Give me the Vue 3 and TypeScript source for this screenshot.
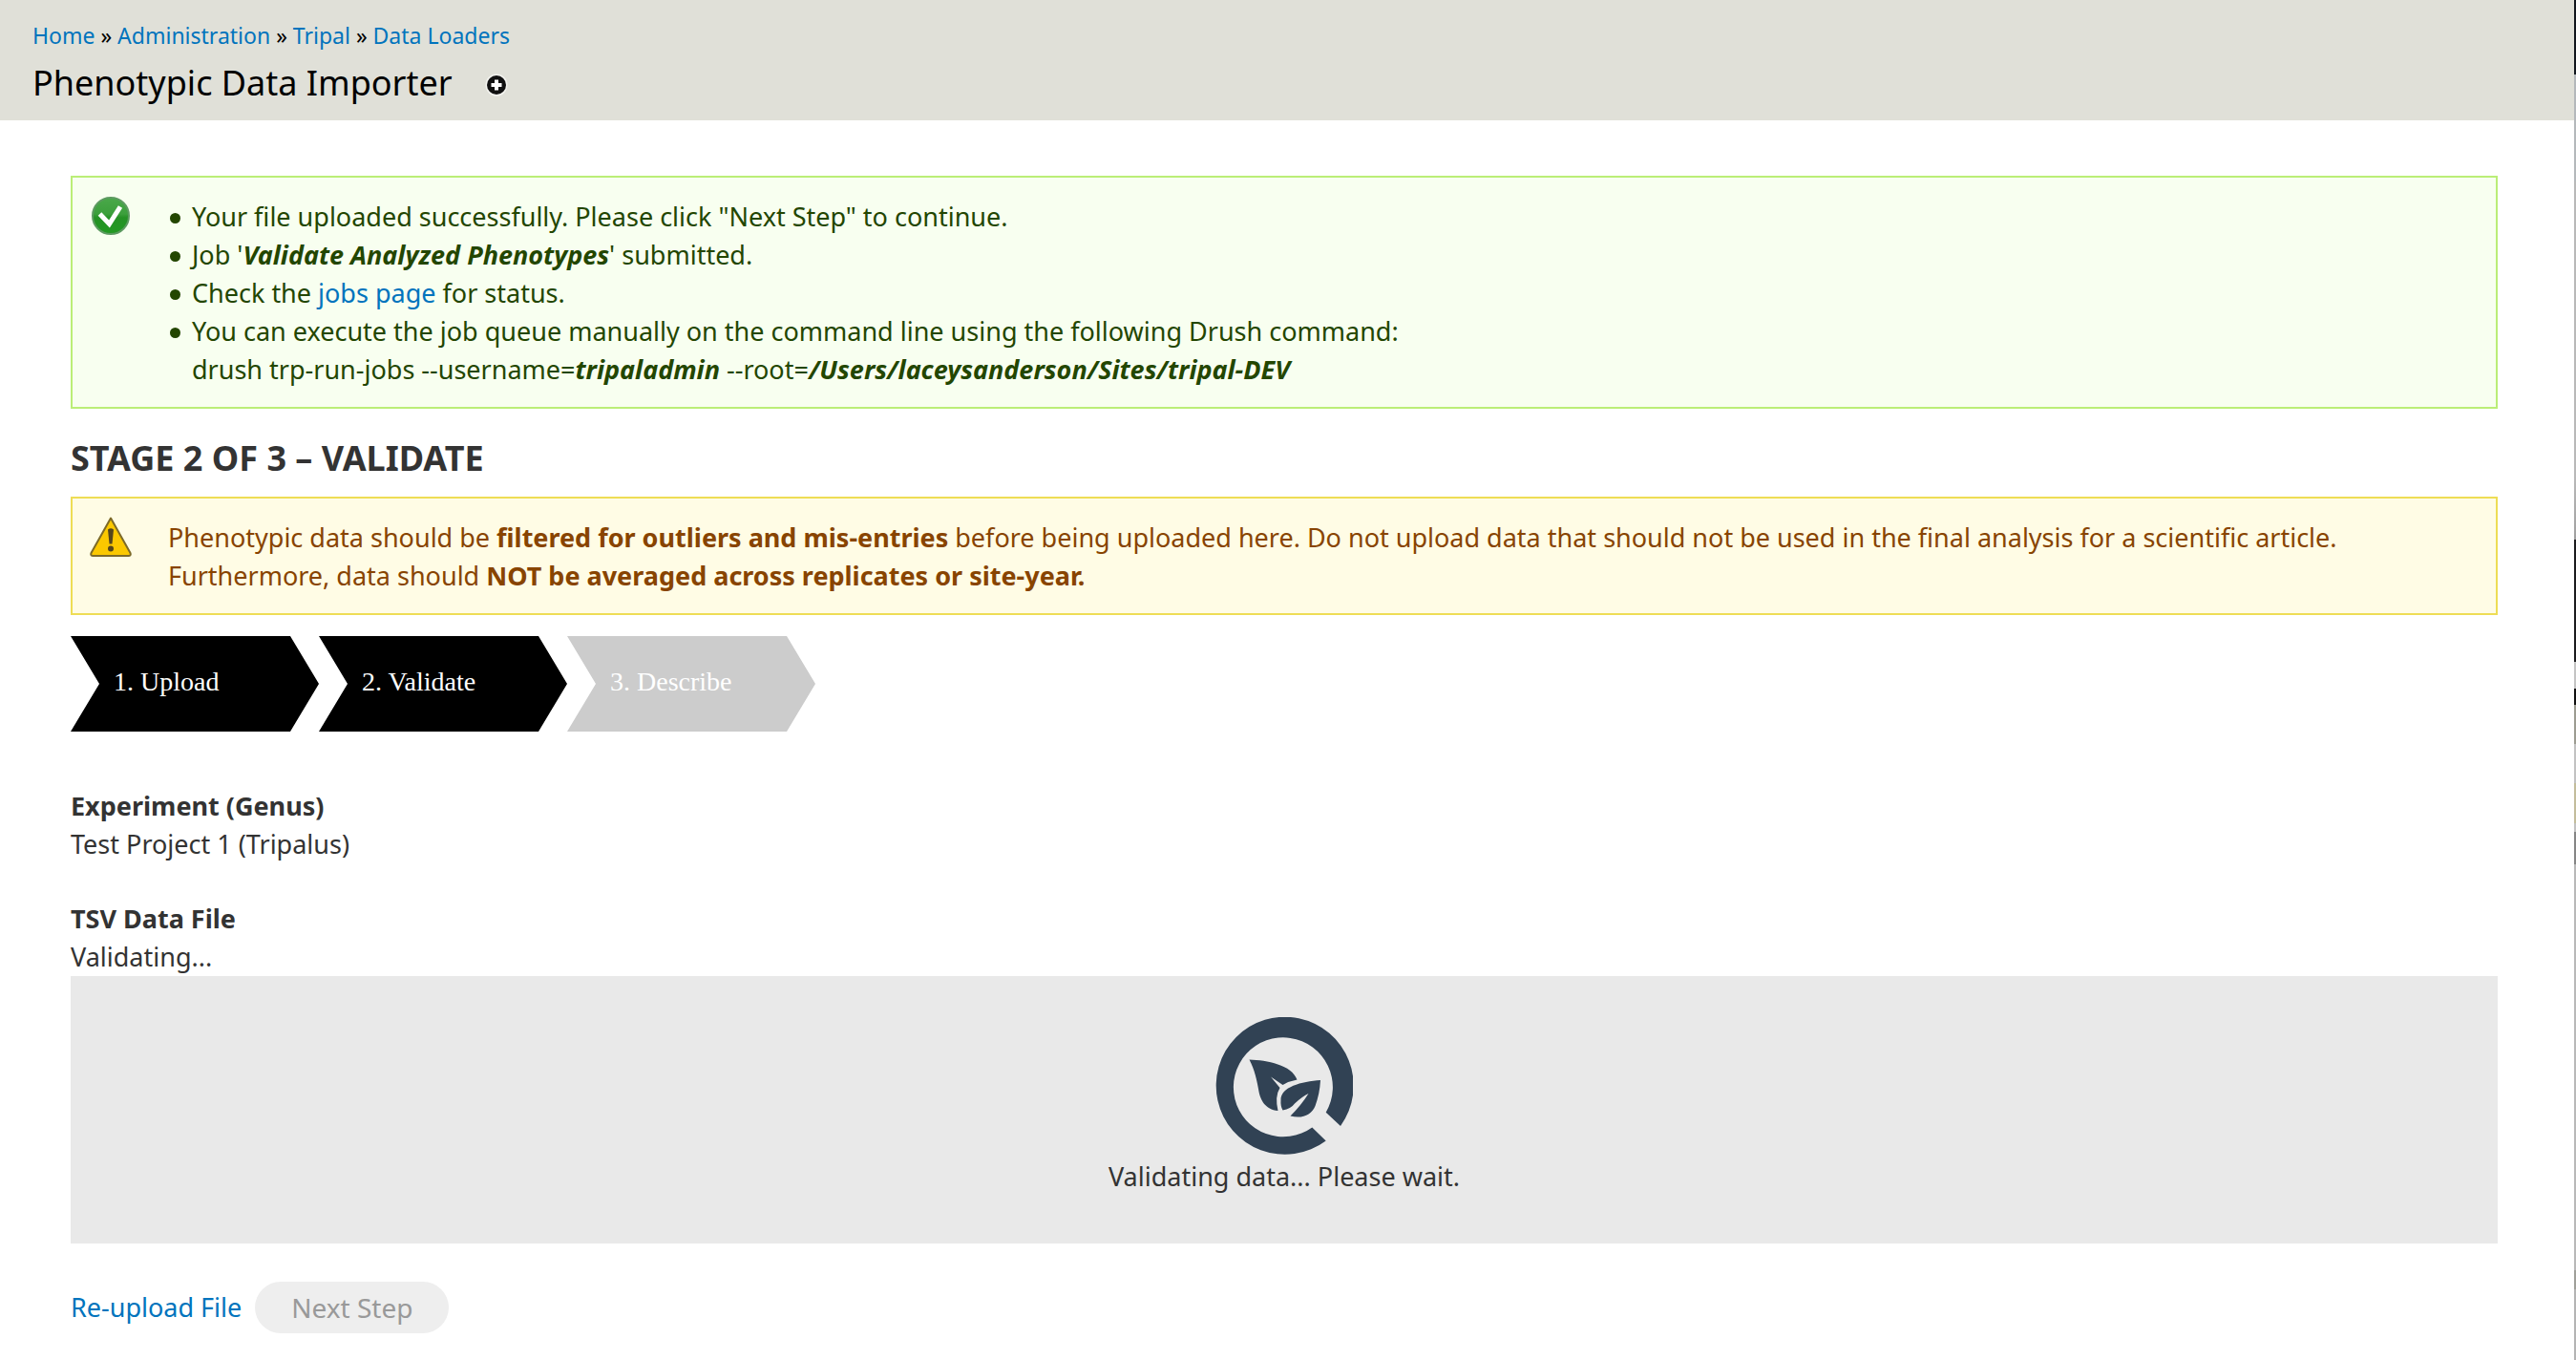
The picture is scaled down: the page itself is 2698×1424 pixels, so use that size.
<script setup lang="ts">
interface Crumb {
  label: string
  href: string
}

interface Step {
  label: string
  done: boolean
}

const crumbs: Crumb[] = [
  { label: 'Home', href: '#home' },
  { label: 'Administration', href: '#admin' },
  { label: 'Tripal', href: '#tripal' },
  { label: 'Data Loaders', href: '#loaders' },
]

const steps: Step[] = [
  { label: '1. Upload', done: true },
  { label: '2. Validate', done: true },
  { label: '3. Describe', done: false },
]
</script>

<template>
  <div class="page">
    <div class="main">
      <header class="branding">
        <nav class="breadcrumb" aria-label="Breadcrumb">
          <template v-for="(crumb, i) in crumbs" :key="crumb.label">
            <template v-if="i > 0"> » </template><a :href="crumb.href">{{ crumb.label }}</a>
          </template>
        </nav>
        <div class="title-row">
          <h1>Phenotypic Data Importer</h1>
          <a class="shortcut" href="#add-shortcut" aria-label="Add to shortcuts">
            <svg viewBox="0 0 24 24" width="24" height="24">
              <circle cx="12" cy="12" r="11.5" fill="#f4f4f0" />
              <circle cx="12" cy="12" r="10" fill="#111" />
              <path d="M12 6.500v11M6.500 12h11" stroke="#fff" stroke-width="4" />
            </svg>
          </a>
        </div>
      </header>

      <main class="content">
        <section class="message status">
          <svg class="message-icon" viewBox="0 0 44 44" width="44" height="44" aria-hidden="true">
            <defs>
              <linearGradient id="ok" x1="0" y1="0" x2="0" y2="1">
                <stop offset="0" stop-color="#4aa84a" />
                <stop offset="0.450" stop-color="#3c9f3c" />
                <stop offset="0.550" stop-color="#259125" />
                <stop offset="1" stop-color="#229a22" />
              </linearGradient>
            </defs>
            <circle cx="22" cy="22" r="19" fill="url(#ok)" stroke="#5c9a60" stroke-width="2" />
            <path d="M10.500 20L20.500 30.500L32 12.500" fill="none" stroke="#fff" stroke-width="5" />
          </svg>
          <ul>
            <li><span>Your file uploaded successfully. Please click "Next Step" to continue.</span></li>
            <li><span>Job '<em>Validate Analyzed Phenotypes</em>' submitted.</span></li>
            <li><span>Check the <a href="#jobs">jobs page</a> for status.</span></li>
            <li>
              <span>
                You can execute the job queue manually on the command line using the following Drush command:<br />
                drush trp-run-jobs --username=<em>tripaladmin</em> --root=<em>/Users/laceysanderson/Sites/tripal-DEV</em>
              </span>
            </li>
          </ul>
        </section>

        <h2>STAGE 2 OF 3 – VALIDATE</h2>

        <section class="message warning">
          <svg class="message-icon" viewBox="0 0 44 44" width="44" height="44" aria-hidden="true">
            <path d="M22 2.500L42.500 39Q43.500 42 40.500 42H3.500Q0.500 42 1.500 39Z" fill="#fbc800" stroke="#7d6a28" stroke-width="2" stroke-linejoin="round" />
            <path d="M19 14.500q3-2.500 6 0l-1.500 15h-3z" fill="#54451c" />
            <circle cx="22" cy="34.500" r="3" fill="#54451c" />
          </svg>
          <p>
            Phenotypic data should be <strong>filtered for outliers and mis-entries</strong> before being uploaded here. Do not upload data that should not be used in the final analysis for a scientific article.<br />
            Furthermore, data should <strong>NOT be averaged across replicates or site-year.</strong>
          </p>
        </section>

        <ol class="steps">
          <li v-for="step in steps" :key="step.label" :class="{ done: step.done }">{{ step.label }}</li>
        </ol>

        <dl class="details">
          <div>
            <dt>Experiment (Genus)</dt>
            <dd>Test Project 1 (Tripalus)</dd>
          </div>
          <div>
            <dt>TSV Data File</dt>
            <dd>Validating...</dd>
          </div>
        </dl>

        <div class="progress" role="status">
          <svg viewBox="0 0 144 144" width="144" height="144" aria-hidden="true">
            <g fill="#314254">
              <path d="M131 114A72 72 0 1 0 115.700 129.500L101.300 115.500A52 52 0 1 1 115.700 99.700Z" />
              <path d="M35.500 44.500C54 45 80 50 85.500 65.500Q77 67 70.500 71L58 62.500L67.500 74Q62 83 65.500 98C52 97 47 86 45.500 78C43.500 66 41 55 35.500 44.500Z" />
              <path d="M110 66C90 67.500 68 73 68.500 87Q68 93 70.500 97.500Q79 96 83 90.500Q91 83 97.500 80Q90 92 78.500 103.500C91 107 101 102 104.500 93C107.500 85 109.500 76 110 66Z" />
            </g>
          </svg>
          <p>Validating data... Please wait.</p>
        </div>

        <div class="actions">
          <a href="#reupload">Re-upload File</a>
          <button type="button" disabled>Next Step</button>
        </div>
      </main>
    </div>
    <div class="edge" aria-hidden="true"></div>
  </div>
</template>

<style>
body {
  margin: 0;
  background: #fff;
}
</style>

<style scoped>
.page {
  display: flex;
  min-height: 100vh;
  color: #333;
  font-family: "Noto Sans", "Open Sans", sans-serif;
  font-size: 27px;
  line-height: 40px;
}

.main {
  flex: 1;
  min-width: 0;
}

/* sliver of the window behind, seen past the page's right side */
.edge {
  width: 2px;
  background: linear-gradient(
    #12171e 0 78px,
    #b4b8bb 78px 190px,
    #b8b8b8 190px 500px,
    #a0a0a0 565px,
    #1c1c1e 565px 693px,
    #c4c4c4 693px 721px,
    #111 721px 738px,
    #9d9c92 738px 779px,
    #c2c2c2 779px 820px,
    #c3bd9c 820px 862px,
    #c2c2c2 862px 871px,
    #868686 871px 905px,
    #b8b8b8 905px 1330px,
    #a0a09a 1330px 1350px,
    #b4b4b4 1350px
  );
}

a {
  color: #0074bd;
  text-decoration: none;
}

.branding {
  box-sizing: border-box;
  height: 126px;
  padding: 20px 34px 0;
  background: #e0e0d8;
  color: #000;
}

.breadcrumb {
  font-size: 23px;
  line-height: 34px;
}

.title-row {
  display: flex;
  align-items: center;
  gap: 34px;
}

h1 {
  margin: 0;
  font-size: 36px;
  font-weight: 400;
  line-height: 66px;
}

.shortcut {
  display: flex;
  padding-top: 4px;
}

.content {
  padding: 58px 80px 24px 74px;
}

.message {
  display: flex;
  padding-bottom: 19px;
  border: 2px solid;
}

.message-icon {
  flex: none;
  margin: 18px 38px 0 18px;
}

.status {
  border-color: #be7;
  background: #f8fff0;
  color: #234600;
}

.status ul {
  margin: 21px 0 0;
  padding: 0 0 0 2px;
  list-style: none;
}

.status li {
  display: flex;
  gap: 12px;
}

.status li::before {
  flex: none;
  width: 11px;
  height: 11px;
  margin-top: 16px;
  border-radius: 50%;
  background: currentColor;
  content: "";
}

.status em {
  font-weight: 700;
}

h2 {
  margin: 32px 0 20px;
  font-size: 36px;
  font-weight: 700;
  line-height: 40px;
}

.warning {
  border-color: #ed5;
  background: #fffce5;
  color: #840;
}

.warning p {
  margin: 21px 0 0;
}

.steps {
  display: flex;
  margin: 22px 0 58px;
  padding: 0;
  list-style: none;
  color: #fff;
  font-family: "Liberation Serif", serif;
  font-size: 28px;
  line-height: 96px;
}

.steps li {
  box-sizing: border-box;
  width: 260px;
  height: 100px;
  padding-left: 45px;
  background: #ccc;
  clip-path: polygon(0 0, 230px 0, 100% 50%, 230px 100%, 0 100%, 30px 50%);
}

.steps .done {
  background: #000;
}

.details {
  display: grid;
  gap: 38px;
  margin: 0;
}

dt {
  font-weight: 700;
}

dd {
  margin: 0;
}

.progress {
  display: flex;
  flex-direction: column;
  align-items: center;
  padding: 43px 0 50px;
  background: #e9e9e9;
}

.progress p {
  margin: 3px 0 0;
}

.actions {
  display: flex;
  align-items: center;
  gap: 14px;
  margin-top: 40px;
}

button {
  height: 54px;
  padding: 0 38px;
  border: 0;
  border-radius: 27px;
  background: #eee;
  color: #999;
  font: inherit;
  font-size: 28px;
}
</style>
